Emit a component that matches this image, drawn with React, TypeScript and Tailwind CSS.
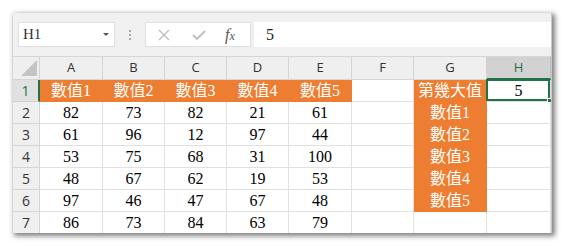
import React from "react";

const cols = ["A", "B", "C", "D", "E", "F", "G", "H"];

const data: (number | string)[][] = [
  [82, 73, 82, 21, 61],
  [61, 96, 12, 97, 44],
  [53, 75, 68, 31, 100],
  [48, 67, 62, 19, 53],
  [97, 46, 47, 67, 48],
  [86, 73, 84, 63, 79],
];

const gLabels = ["第幾大值", "數值1", "數值2", "數值3", "數值4", "數值5"];

const cellFont = "font-['Liberation_Serif','Noto_Sans_CJK_TC',serif] text-[16px]";
const headFont = "font-['Open_Sans','Noto_Sans',sans-serif]";

function Cell({
  children,
  orange,
  className = "",
}: {
  children?: React.ReactNode;
  orange?: boolean;
  className?: string;
}) {
  return (
    <div
      className={`relative flex items-center justify-center border-r border-b leading-none ${cellFont} ${
        orange
          ? "bg-[#ed7d31] border-[#ed7d31] text-white"
          : "bg-white border-[#e1e1e1] text-black"
      } ${className}`}
    >
      {children}
    </div>
  );
}

export default function App() {
  const rows: React.ReactNode[] = [];

  // row 1
  rows.push(
    <React.Fragment key="r1">
      <div
        className={`flex items-center justify-center bg-[#e1e1e1] border-b border-r-2 border-b-[#d0d0d0] border-r-[#217346] text-[14px] text-[#217346] ${headFont}`}
      >
        1
      </div>
      {[1, 2, 3, 4, 5].map((n) => (
        <Cell key={n} orange>
          數值{n}
        </Cell>
      ))}
      <Cell />
      <Cell orange>{gLabels[0]}</Cell>
      <Cell>
        5
        <div className="absolute -left-px -top-px right-0 bottom-0 border-2 border-[#217346]" />
        <div className="absolute -right-[3px] -bottom-[3px] w-[6px] h-[6px] bg-[#217346] border border-white" />
      </Cell>
    </React.Fragment>
  );

  data.forEach((r, i) => {
    rows.push(
      <React.Fragment key={`r${i + 2}`}>
        <div
          className={`flex items-center justify-center bg-[#efefef] border-b border-r border-[#d4d4d4] text-[14px] text-[#333] ${headFont}`}
        >
          {i + 2}
        </div>
        {r.map((v, j) => (
          <Cell key={j}>{v}</Cell>
        ))}
        <Cell />
        <Cell orange={i + 1 < gLabels.length}>{gLabels[i + 1]}</Cell>
        <Cell />
      </React.Fragment>
    );
  });

  return (
    <div className="min-h-screen bg-white pl-[13px] pt-[13px]">
      <div className="w-[539px] h-[220px] overflow-hidden bg-white shadow-[2px_2px_5px_1px_rgba(0,0,0,0.5)] border-r border-[#c8c8c8]">
        {/* formula bar */}
        <div className="h-[44px] bg-[#f0f0f0] flex items-start pt-[9px] pl-[5px] border-b border-[#d6d6d6]">
          <div className="w-[97px] h-[25px] bg-white border border-[#e0e0e0] flex items-center justify-between pl-[4px] pr-[5px]">
            <span className="font-['Liberation_Serif',serif] text-[15px] text-[#333]">H1</span>
            <span className="w-0 h-0 border-l-[3px] border-r-[3px] border-t-[3px] border-l-transparent border-r-transparent border-t-[#555]" />
          </div>
          <div className="w-[30px] h-[25px] flex flex-col items-center justify-center gap-[2px]">
            <span className="w-[2px] h-[2px] bg-[#a8a8a8]" />
            <span className="w-[2px] h-[2px] bg-[#a8a8a8]" />
            <span className="w-[2px] h-[2px] bg-[#a8a8a8]" />
          </div>
          <div className="w-[106px] h-[25px] bg-white border border-[#e0e0e0] flex items-center">
            <svg width="14" height="14" viewBox="0 0 14 14" className="ml-[11px]">
              <path d="M2 2 L12 12 M12 2 L2 12" stroke="#bdbdbd" strokeWidth="1.3" fill="none" />
            </svg>
            <svg width="16" height="14" viewBox="0 0 16 14" className="ml-[20px]">
              <path d="M2 7 L6 11 L14 3" stroke="#bdbdbd" strokeWidth="1.8" fill="none" />
            </svg>
            <span className="ml-[18px] font-['Liberation_Serif',serif] italic text-[16px] text-[#555]">
              f<span className="text-[12px]">x</span>
            </span>
          </div>
          <div className="ml-[3px] flex-1 h-[25px] bg-white flex items-center pl-[12px]">
            <span className="font-['Liberation_Serif',serif] text-[16px] text-[#222]">5</span>
          </div>
        </div>

        {/* grid */}
        <div className="grid grid-cols-[27px_63px_62px_62px_62px_63px_62px_73px_64px] grid-rows-[23px_repeat(7,22px)]">
          <div className="relative bg-[#efefef] border-r border-b border-[#d4d4d4]">
            <svg width="16" height="16" viewBox="0 0 16 16" className="absolute right-[2px] bottom-[3px]">
              <path d="M16 0 L16 16 L0 16 Z" fill="#c4c4c4" />
            </svg>
          </div>
          {cols.map((c) => (
            <div
              key={c}
              className={`flex items-center justify-center text-[13px] ${headFont} ${
                c === "H"
                  ? "bg-[#d2d2d2] text-[#217346] border-b-2 border-b-[#217346] border-r border-r-[#c0c0c0]"
                  : "bg-[#efefef] text-[#333] border-r border-b border-[#d4d4d4]"
              }`}
            >
              {c}
            </div>
          ))}
          {rows}
        </div>
      </div>
    </div>
  );
}
